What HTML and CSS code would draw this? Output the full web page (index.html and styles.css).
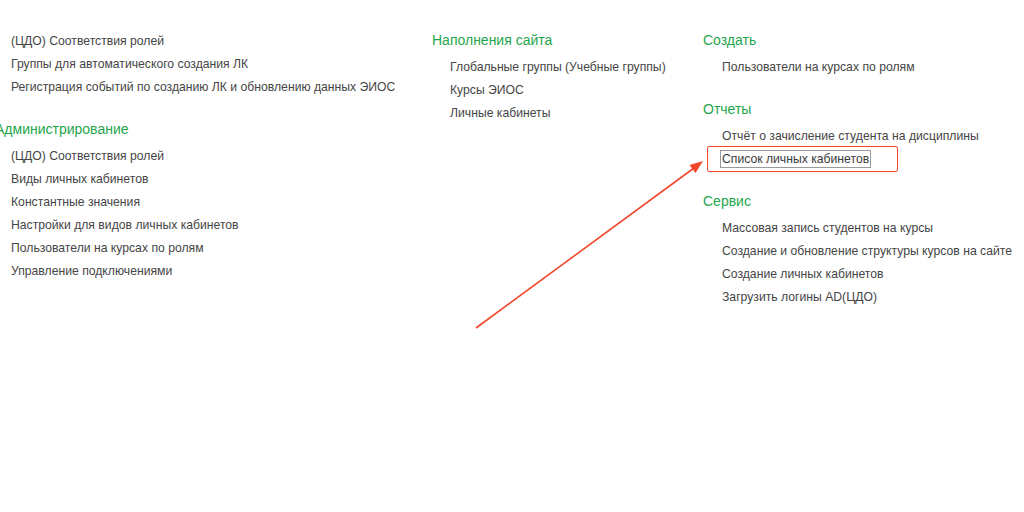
FILE: index.html
```html
<!DOCTYPE html>
<html lang="ru">
<head>
<meta charset="utf-8">
<title>Панель</title>
<link rel="stylesheet" href="styles.css">
</head>
<body>
<div class="page">
  <div class="col col-1">
    <ul class="items">
      <li>(ЦДО) Соответствия ролей</li>
      <li>Группы для автоматического создания ЛК</li>
      <li>Регистрация событий по созданию ЛК и обновлению данных ЭИОС</li>
    </ul>
    <section class="group">
      <h2 class="title">Администрирование</h2>
      <ul class="items">
        <li>(ЦДО) Соответствия ролей</li>
        <li>Виды личных кабинетов</li>
        <li>Константные значения</li>
        <li>Настройки для видов личных кабинетов</li>
        <li>Пользователи на курсах по ролям</li>
        <li>Управление подключениями</li>
      </ul>
    </section>
  </div>
  <div class="col col-2">
    <section class="group">
      <h2 class="title">Наполнения сайта</h2>
      <ul class="items">
        <li>Глобальные группы (Учебные группы)</li>
        <li>Курсы ЭИОС</li>
        <li>Личные кабинеты</li>
      </ul>
    </section>
  </div>
  <div class="col col-3">
    <section class="group">
      <h2 class="title">Создать</h2>
      <ul class="items">
        <li>Пользователи на курсах по ролям</li>
      </ul>
    </section>
    <section class="group">
      <h2 class="title">Отчеты</h2>
      <ul class="items">
        <li>Отчёт о зачисление студента на дисциплины</li>
        <li class="marked"><span class="focus">Список личных кабинетов</span><span class="highlight"></span></li>
      </ul>
    </section>
    <section class="group">
      <h2 class="title">Сервис</h2>
      <ul class="items">
        <li>Массовая запись студентов на курсы</li>
        <li>Создание и обновление структуры курсов на сайте</li>
        <li>Создание личных кабинетов</li>
        <li>Загрузить логины AD(ЦДО)</li>
      </ul>
    </section>
  </div>
</div>
<svg class="arrow" width="1024" height="512" viewBox="0 0 1024 512">
  <line x1="476" y1="328" x2="694" y2="168" stroke="#f2472c" stroke-width="1.6"/>
  <polygon points="703,161 689.5,165 695.5,173" fill="#f2472c"/>
</svg>
</body>
</html>
```
FILE: styles.css
```css
html, body {
  margin: 0;
  padding: 0;
  background: #ffffff;
  overflow: hidden;
}
body {
  width: 1024px;
  height: 512px;
  position: relative;
  font-family: "Liberation Sans", Arial, sans-serif;
  color: #454545;
}
.page {
  display: grid;
  grid-template-columns: 432px 271px 1fr;
  padding-top: 25px;
}
.col-1 {
  padding-left: 11px;
  padding-top: 5px;
}
.col-1 .title {
  margin-left: -16px;
}
.col-2 .items {
  padding-left: 18px;
}
.col-3 .items {
  padding-left: 19px;
}
.group {
  margin: 0;
}
.title {
  margin: 0;
  font-size: 14px;
  font-weight: normal;
  line-height: 31px;
  color: #1fa64c;
  white-space: nowrap;
}
.items {
  list-style: none;
  margin: 0 0 15px 0;
  padding: 0;
}
.items li {
  font-size: 12.2px;
  line-height: 23px;
  white-space: nowrap;
}
.marked {
  position: relative;
}
.focus {
  display: inline-block;
  border: 1px solid #9a9a9a;
  line-height: 16px;
  padding: 0 1px;
  margin-left: -2px;
  color: #3a3a3a;
}
.highlight {
  position: absolute;
  left: -15px;
  top: -2px;
  width: 189px;
  height: 24px;
  border: 1.6px solid #f2472c;
  border-radius: 2px;
}
.arrow {
  position: absolute;
  left: 0;
  top: 0;
  pointer-events: none;
}
```
